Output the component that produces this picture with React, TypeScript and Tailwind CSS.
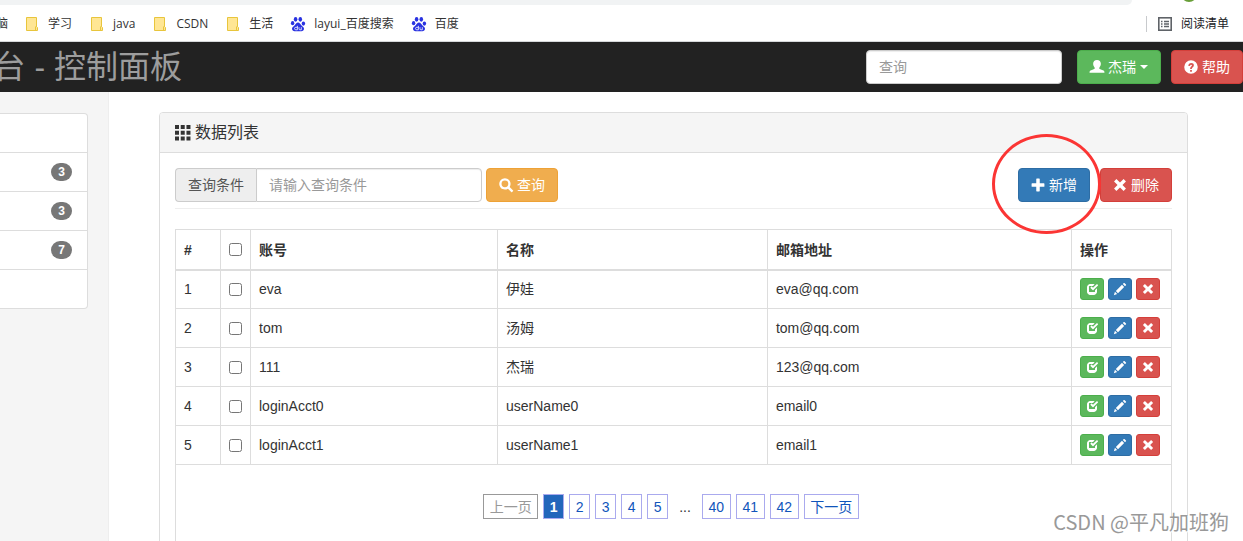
import type { ReactNode } from 'react'

interface Account {
  id: number
  account: string
  name: string
  email: string
}

const accounts: Account[] = [
  { id: 1, account: 'eva', name: '伊娃', email: 'eva@qq.com' },
  { id: 2, account: 'tom', name: '汤姆', email: 'tom@qq.com' },
  { id: 3, account: '111', name: '杰瑞', email: '123@qq.com' },
  { id: 4, account: 'loginAcct0', name: 'userName0', email: 'email0' },
  { id: 5, account: 'loginAcct1', name: 'userName1', email: 'email1' },
]

const bookmarks = [
  { label: '学习', kind: 'folder' },
  { label: 'java', kind: 'folder' },
  { label: 'CSDN', kind: 'folder' },
  { label: '生活', kind: 'folder' },
  { label: 'layui_百度搜索', kind: 'baidu' },
  { label: '百度', kind: 'baidu' },
]

const menuCounts = [null, 3, 3, 7, null]

// Icon outlines on a 1200 unit grid with the y axis pointing up
const glyphs = {
  plus: 'M450 1150h250q50 0 50 -50v-350h350q50 0 50 -50v-200q0 -50 -50 -50h-350v-350q0 -50 -50 -50h-200q-50 0 -50 50v350h-350q-50 0 -50 50v200q0 50 50 50h350v350q0 50 50 50z',
  pencil: 'M1011 1210q19 0 33 -13l153 -153q13 -14 13 -33t-13 -33l-99 -92l-214 214l95 96q13 14 32 14zM1013 800l-615 -614l-214 214l614 614zM317 96l-333 -112l110 335z',
  search: 'M507 1177q98 0 187.5 -38.5t154.5 -103.5t103.5 -154.5t38.5 -187.5q0 -141 -78 -262l300 -299q8 -8 8 -18.5t-8 -18.5l-109 -108q-7 -8 -17.5 -8t-18.5 8l-300 299q-119 -77 -261 -77q-98 0 -188 38.5t-154.5 103t-103 154.5t-38.5 188t38.5 187.5t103 154.5t154.5 103.5t188 38.5zM507 987a290 290 0 1 1 0 -580a290 290 0 1 1 0 580z',
  remove: 'M290 1110L90 910L390 600L90 290L290 90L600 390L910 90L1110 290L810 600L1110 910L910 1110L600 810z',
  check: 'M350 1100h400q60 0 115 -22l-165 -178h-350q-50 0 -50 -50v-500q0 -50 50 -50h500q50 0 50 50v120l200 200v-370q0 -90 -105 -195t-195 -105h-400q-90 0 -195 105t-105 195v500q0 90 105 195t195 105zM1130 1070l70 -70q15 -20 0 -40l-480 -480q-20 -20 -40 0l-230 230q-18 20 0 40l90 90q20 18 40 0l120 -120l370 350q30 20 60 0z',
  user: 'M600 1200c210 0 330 -130 330 -330c0 -130 -50 -230 -120 -310c-30 -50 -20 -110 30 -140c80 -50 210 -90 310 -130c70 -30 90 -80 90 -190h-1280c0 110 20 160 90 190c100 40 230 80 310 130c50 30 60 90 30 140c-70 80 -120 180 -120 310c0 200 120 330 330 330z',
  question: 'M600 1180a580 580 0 1 0 0 -1160a580 580 0 1 0 0 1160zM525 475v-50h150v50q0 40 60 85q110 75 110 185q0 190 -245 190q-215 0 -245 -225l165 -20q10 105 85 105q75 0 75 -60q0 -35 -70 -90q-85 -65 -85 -170zM525 350v-150h150v150z',
  th: 'M0 1200h300v-300h-300zM430 1200h300v-300h-300zM860 1200h300v-300h-300zM0 770h300v-300h-300zM430 770h300v-300h-300zM860 770h300v-300h-300zM0 340h300v-300h-300zM430 340h300v-300h-300zM860 340h300v-300h-300z',
}

function Glyph({ name, className = 'size-[14px]' }: { name: keyof typeof glyphs; className?: string }) {
  return (
    <svg viewBox="0 0 1200 1200" className={`shrink-0 overflow-visible ${className}`} fill="currentColor" aria-hidden="true">
      <path transform="matrix(1 0 0 -1 0 1200)" fillRule="evenodd" d={glyphs[name]} />
    </svg>
  )
}

const tones = {
  success: 'bg-[#5cb85c] border-[#4cae4c]',
  danger: 'bg-[#d9534f] border-[#d43f3a]',
  primary: 'bg-[#337ab7] border-[#2e6da4]',
  warning: 'bg-[#f0ad4e] border-[#eea236]',
}

function Button({ tone, icon, children }: { tone: keyof typeof tones; icon: keyof typeof glyphs; children: ReactNode }) {
  return (
    <button type="button" className={`flex h-[34px] shrink-0 items-center gap-1 rounded border px-3 text-sm text-white ${tones[tone]}`}>
      <Glyph name={icon} />
      {children}
    </button>
  )
}

function RowButton({ tone, icon, label }: { tone: keyof typeof tones; icon: keyof typeof glyphs; label: string }) {
  return (
    <button type="button" aria-label={label} className={`flex h-[22px] w-6 items-center justify-center rounded-[3px] border pb-px text-white ${tones[tone]}`}>
      <Glyph name={icon} className="size-3" />
    </button>
  )
}

function FolderIcon() {
  return (
    <svg viewBox="0 0 16 16" className="size-4 shrink-0" aria-hidden="true">
      <path d="M2.5 1.5h10v9l1 1v3h-11z" fill="#ffe694" stroke="#e8c53c" />
      <path d="M11.5 14v-3l1-1" fill="none" stroke="#e8c53c" />
    </svg>
  )
}

function PawIcon() {
  return (
    <svg viewBox="0 0 16 16" className="size-4 shrink-0" fill="#2932e1" aria-hidden="true">
      <ellipse cx="5.6" cy="3.3" rx="1.8" ry="2.4" />
      <ellipse cx="10.3" cy="3.3" rx="1.8" ry="2.4" />
      <ellipse cx="2.6" cy="7.2" rx="1.7" ry="2.1" />
      <ellipse cx="13.4" cy="7.6" rx="1.7" ry="2.1" />
      <path d="M8 6.6c1.7 0 2.2 1.5 3.3 2.6 1.4 1.3 2.7 2 2.7 3.6 0 1.5-1.2 2.4-2.6 2.4H4.6C3.2 15.2 2 14.3 2 12.8c0-1.6 1.3-2.3 2.7-3.6C5.8 8.1 6.3 6.6 8 6.6z" />
      <path d="M7.4 9.8v4h-1.6a1.2 1.2 0 0 1 0-2.5h1.6M9 11.2v1.6q0 1 1 1h1.3v-2.6" fill="none" stroke="#fff" strokeWidth="0.8" />
    </svg>
  )
}

function BrowserBar() {
  return (
    <div className="border-b border-[#d5d7da] bg-white font-['Open_Sans','Noto_Sans_CJK_SC',sans-serif] text-xs text-[#333]">
      <div className="flex h-[5px] overflow-hidden pr-[46px]">
        <div className="flex-1 rounded-br-[12px] bg-[#f1f3f4]" />
        <svg viewBox="0 0 16 5" className="ml-[49px] h-[5px] w-4" aria-hidden="true">
          <circle cx="8" cy="-6" r="8" fill="#689f38" />
        </svg>
      </div>
      <div className="flex h-9 items-center pt-px pr-[14px]">
        <div className="flex w-2 justify-end overflow-hidden">
          <span>脑</span>
        </div>
        <div className="flex gap-[17px] pl-4">
          {bookmarks.map((b) => (
            <a key={b.label} href="#" className="flex items-center gap-2 whitespace-nowrap">
              {b.kind === 'folder' ? <FolderIcon /> : <PawIcon />}
              {b.label}
            </a>
          ))}
        </div>
        <button type="button" className="ml-auto flex h-4 items-center gap-2 border-l border-[#c8cacd] pl-[10px] text-[#202124]">
          <svg viewBox="0 0 16 16" className="size-4" fill="none" stroke="#5f6368" aria-hidden="true">
            <rect x="1.8" y="1.8" width="12.4" height="12.4" strokeWidth="1.6" />
            <path d="M4 5.5h1.5M7 5.5h5M4 8h1.5M7 8h5M4 10.5h1.5M7 10.5h5" strokeWidth="1.3" />
          </svg>
          阅读清单
        </button>
      </div>
    </div>
  )
}

function Navbar() {
  return (
    <header className="flex h-[50px] items-center bg-[#222]">
      <div className="flex w-[182px] justify-end overflow-hidden text-[32px] leading-[50px] whitespace-nowrap text-[#9d9d9d]">
        <a href="#">台 - 控制面板</a>
      </div>
      <input
        type="text"
        aria-label="查询"
        placeholder="查询"
        className="ml-auto h-[34px] w-[196px] rounded border border-[#ccc] bg-white px-3 text-sm shadow-[inset_0_1px_1px_rgba(0,0,0,0.075)] placeholder:text-[#999]"
      />
      <div className="ml-[15px] flex gap-[10px]">
        <Button tone="success" icon="user">
          <span className="flex items-center gap-1">
            杰瑞
            <span className="border-x-4 border-t-4 border-x-transparent border-t-white" />
          </span>
        </Button>
        <Button tone="danger" icon="question">帮助</Button>
      </div>
    </header>
  )
}

function Sidebar() {
  return (
    <aside className="w-[109px] shrink-0 border-r border-[#eee] bg-[#f5f5f5] pt-[21px] pr-5">
      <ul className="divide-y divide-[#ddd] rounded-r border border-l-0 border-[#ddd] bg-white">
        {menuCounts.map((count, i) => (
          <li key={i} className="flex h-[38px] items-center justify-end pr-[15px] [&:not(:last-child)]:h-[39px]">
            {count !== null && (
              <span className="flex h-[18px] w-[21px] items-center justify-center rounded-[10px] bg-[#777] text-xs font-bold text-white">
                {count}
              </span>
            )}
          </li>
        ))}
      </ul>
    </aside>
  )
}

function Pagination() {
  const page = 'flex h-[25px] items-center justify-center border border-[#aae] text-[#15b]'
  return (
    <nav aria-label="分页" className="my-5 flex justify-center gap-[5px] pr-[5px]">
      <span className="flex h-[25px] w-[55px] items-center justify-center border border-[#999] text-[#999]">上一页</span>
      <span className="flex h-[25px] w-[21px] items-center justify-center border border-[#aae] bg-[#26b] font-bold text-white">1</span>
      {[2, 3, 4, 5].map((n) => (
        <a key={n} href="#" className={`${page} w-[21px]`}>{n}</a>
      ))}
      <span className="flex h-[25px] items-center px-[6px]">...</span>
      {[40, 41, 42].map((n) => (
        <a key={n} href="#" className={`${page} w-[29px]`}>{n}</a>
      ))}
      <a href="#" className={`${page} w-[55px]`}>下一页</a>
    </nav>
  )
}

function AccountTable() {
  const cell = 'border border-[#ddd] px-2'
  const head = 'border border-b-2 border-[#ddd] px-2 pt-px text-left font-bold'
  return (
    <table className="mt-5 w-full table-fixed border-collapse border border-[#ddd]">
      <colgroup>
        <col className="w-[45px]" />
        <col className="w-[30px]" />
        <col className="w-[24.8%]" />
        <col className="w-[27.1%]" />
        <col />
        <col className="w-[100px]" />
      </colgroup>
      <thead>
        <tr className="h-10">
          <th className={head}>#</th>
          <th className={head}>
            <input type="checkbox" aria-label="全选" className="block size-[13px]" />
          </th>
          <th className={head}>账号</th>
          <th className={head}>名称</th>
          <th className={head}>邮箱地址</th>
          <th className={head}>操作</th>
        </tr>
      </thead>
      <tbody>
        {accounts.map((row) => (
          <tr key={row.id} className="h-[39px]">
            <td className={cell}>{row.id}</td>
            <td className={cell}>
              <input type="checkbox" aria-label={row.account} className="block size-[13px]" />
            </td>
            <td className={cell}>{row.account}</td>
            <td className={cell}>{row.name}</td>
            <td className={cell}>{row.email}</td>
            <td className={cell}>
              <div className="flex gap-1">
                <RowButton tone="success" icon="check" label="分配" />
                <RowButton tone="primary" icon="pencil" label="修改" />
                <RowButton tone="danger" icon="remove" label="删除" />
              </div>
            </td>
          </tr>
        ))}
      </tbody>
      <tfoot>
        <tr>
          <td colSpan={6} className="border border-[#ddd] px-2 pt-[9px] pb-6">
            <Pagination />
          </td>
        </tr>
      </tfoot>
    </table>
  )
}

export default function App() {
  return (
    <div className="relative flex h-screen flex-col overflow-hidden bg-white font-['Liberation_Sans','Noto_Sans_CJK_SC',sans-serif] text-sm text-[#333]">
      <BrowserBar />
      <Navbar />
      <div className="flex flex-1">
        <Sidebar />
        <main className="min-w-0 flex-1 pt-5 pr-[55px] pl-[50px]">
          <section className="rounded border border-[#ddd] bg-white">
            <h3 className="flex h-10 items-center gap-1 rounded-t-[3px] border-b border-[#ddd] bg-[#f5f5f5] px-[15px] text-base">
              <Glyph name="th" className="size-4" />
              数据列表
            </h3>
            <div className="p-[15px]">
              <div className="flex items-start border-b border-[#eee] pb-[6px]">
                <label htmlFor="keyword" className="flex h-[34px] items-center rounded-l border border-r-0 border-[#ccc] bg-[#eee] px-3 text-[#555]">
                  查询条件
                </label>
                <input
                  id="keyword"
                  type="text"
                  placeholder="请输入查询条件"
                  className="mr-1 h-[34px] w-[226px] rounded-r border border-[#ccc] px-3 shadow-[inset_0_1px_1px_rgba(0,0,0,0.075)] placeholder:text-[#999]"
                />
                <Button tone="warning" icon="search">查询</Button>
                <div className="ml-auto flex gap-[10px]">
                  <div className="relative">
                    <Button tone="primary" icon="plus">新增</Button>
                    <div className="pointer-events-none absolute -top-[34px] -left-[26px] z-10 h-[100px] w-[109px] rounded-[50%] border-3 border-[#fb3534]" />
                  </div>
                  <Button tone="danger" icon="remove">删除</Button>
                </div>
              </div>
              <AccountTable />
            </div>
          </section>
        </main>
      </div>
      <div className="absolute right-[14px] bottom-1 font-['Noto_Sans_CJK_SC',sans-serif] text-xl leading-[30px] text-[#999] [text-shadow:1px_1px_0_#fff]">
        CSDN @平凡加班狗
      </div>
    </div>
  )
}
